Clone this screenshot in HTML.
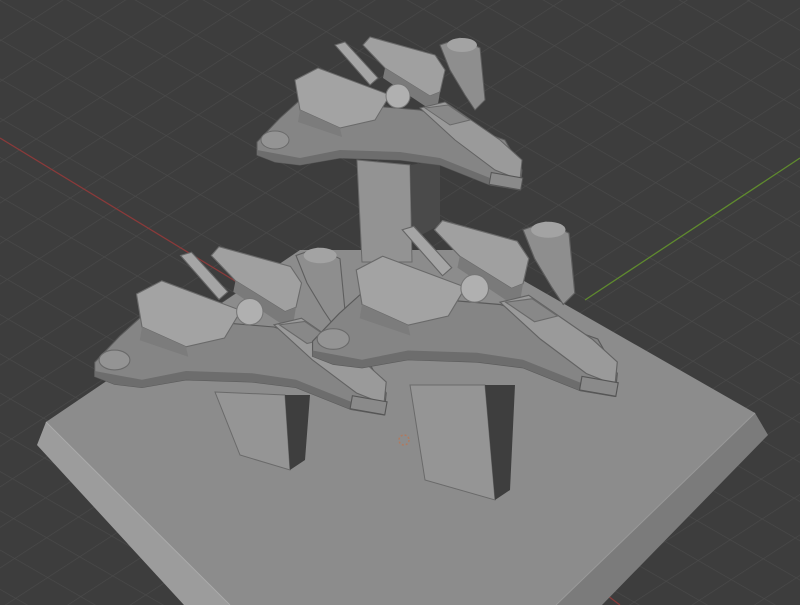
<!DOCTYPE html>
<html><head><meta charset="utf-8"><style>html,body{margin:0;padding:0;background:#3d3d3d;}svg{display:block}</style></head>
<body>
<svg width="800" height="605" viewBox="0 0 800 605" xmlns="http://www.w3.org/2000/svg">
<defs>
<pattern id="g1" width="34" height="34" patternUnits="userSpaceOnUse" patternTransform="rotate(-33)">
<line x1="0" y1="0" x2="34" y2="0" stroke="#4a4a4a" stroke-width="1.2"/></pattern>
<pattern id="g2" width="34" height="34" patternUnits="userSpaceOnUse" patternTransform="rotate(30)">
<line x1="0" y1="0" x2="34" y2="0" stroke="#4a4a4a" stroke-width="1.2"/></pattern>
<g id="ship">
<polygon points="257,142 280,118 300,100 420,110 505,140 522,170 520,190 490,185 440,165 400,160 340,158 300,165 275,162 257,155" fill="#858585" stroke="#5a5a5a" stroke-width="1"/>
<polygon points="257,150 300,158 340,150 400,152 440,158 490,178 520,183 520,190 490,185 440,165 400,160 340,158 300,165 275,162 257,155" fill="#6d6d6d"/>
<ellipse cx="275" cy="140" rx="14" ry="9" fill="#949494" stroke="#6a6a6a"/>
<polygon points="363,45 370,37 435,55 445,70 440,92 430,96 385,68" fill="#a0a0a0" stroke="#6a6a6a"/>
<polygon points="385,68 430,96 440,92 438,104 428,108 383,78" fill="#7a7a7a"/>
<polygon points="440,45 460,38 480,48 485,100 475,110 465,95 450,70" fill="#8e8e8e" stroke="#5e5e5e"/>
<ellipse cx="462" cy="45" rx="15" ry="7" fill="#a3a3a3"/>
<polygon points="335,45 345,42 378,78 370,85" fill="#a5a5a5" stroke="#666"/>
<polygon points="295,80 318,68 390,95 375,120 340,128 300,110" fill="#a3a3a3" stroke="#6a6a6a"/>
<polygon points="300,110 340,128 342,137 298,122" fill="#7c7c7c"/>
<polygon points="420,108 445,102 500,140 522,160 520,180 495,170 455,140" fill="#9a9a9a" stroke="#636363"/>
<polygon points="425,108 448,105 470,120 450,125" fill="#888" stroke="#6a6a6a"/>
<circle cx="398" cy="96" r="12" fill="#b0b0b0" stroke="#777"/>
<rect x="490" y="175" width="32" height="12" fill="#8a8a8a" stroke="#555" transform="rotate(10 505 181)"/>
</g>
</defs>
<rect width="800" height="605" fill="#3d3d3d"/>
<rect width="800" height="605" fill="url(#g1)"/>
<rect width="800" height="605" fill="url(#g2)"/>
<line x1="0" y1="138" x2="250" y2="290" stroke="#8a3a3a" stroke-width="1.3"/>
<line x1="585" y1="300" x2="800" y2="158" stroke="#5f8a2e" stroke-width="1.3"/>
<line x1="600" y1="590" x2="620" y2="605" stroke="#8a3a3a" stroke-width="1.3"/>
<!-- base -->
<polygon points="37,445 46,422 230,605 184,605" fill="#9c9c9c"/>
<polygon points="755,413 768,435 602,605 556,605" fill="#7b7b7b"/>
<polygon points="46,422 300,250 470,250 755,413 556,605 230,605" fill="#8c8c8c"/>
<line x1="46" y1="422" x2="230" y2="605" stroke="#aaa" stroke-width="1"/>
<line x1="755" y1="413" x2="556" y2="605" stroke="#999" stroke-width="1"/>
<!-- top pillar -->
<polygon points="357,160 410,165 412,262 362,262" fill="#939393" stroke="#6a6a6a"/>
<polygon points="410,165 440,160 440,225 412,240" fill="#4a4a4a"/>
<use href="#ship"/>
<!-- left ship pillar -->
<polygon points="215,392 285,395 290,470 240,455" fill="#959595" stroke="#6a6a6a"/>
<polygon points="285,395 310,395 305,460 290,470" fill="#3e3e3e"/>
<use href="#ship" transform="translate(-188,206) scale(1.1)"/>
<!-- right ship pillar -->
<polygon points="410,385 485,385 495,500 425,480" fill="#959595" stroke="#6a6a6a"/>
<polygon points="485,385 515,385 510,490 495,500" fill="#3e3e3e"/>
<use href="#ship" transform="translate(17,178) scale(1.15)"/>
<circle cx="404" cy="440" r="5" fill="none" stroke="#b07a60" stroke-width="1.5" stroke-dasharray="2 2"/>
</svg>
</body></html>
